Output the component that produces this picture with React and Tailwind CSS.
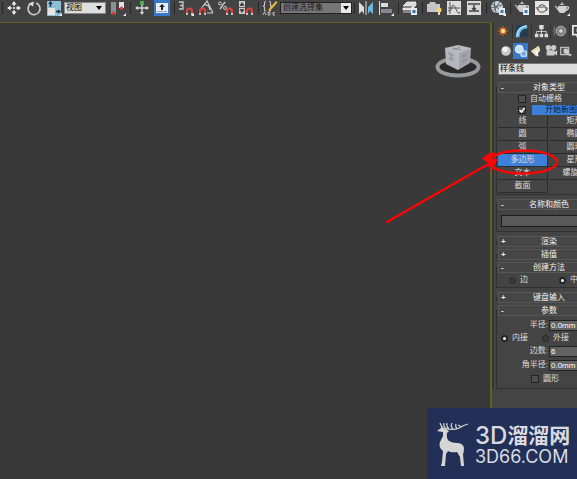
import React from "react";

function Svg({ children }) {
  return (
    <svg viewBox="0 0 16 16" className="size-4 shrink-0" fill="none" aria-hidden="true">
      {children}
    </svg>
  );
}

function Tool({ label, children }) {
  return (
    <button type="button" aria-label={label} className="flex h-4 w-5 shrink-0 items-center justify-center">
      <Svg>{children}</Svg>
    </button>
  );
}

function Separator() {
  return (
    <span className="flex h-3 w-1 shrink-0 justify-center">
      <span className="w-px bg-[#262626]" />
    </span>
  );
}

function Magnet() {
  return (
    <>
      <path d="M9 14v-3a2.5 2.5 0 0 1 5 0v3" stroke="#d9433f" strokeWidth="2" />
      <path d="M8 14h2M13 14h2" stroke="#e8e8e8" strokeWidth="1.5" />
    </>
  );
}

function Corner() {
  return <path d="M16 13v3h-3z" fill="#eee" />;
}

function Teapot({ fill }) {
  return (
    <>
      <path d="M4 6h8q2 4-2 7H6Q3 11 4 6zM5 5q3-2 6 0zM7.3 2.5h1.4V4H7.3z" fill={fill} />
      <path d="M4 10Q3 7 1 6M12 7q3-1 2.5 1T11 11" stroke={fill} strokeWidth="1.3" />
    </>
  );
}

function Toolbar() {
  return (
    <header className="flex h-[22px] shrink-0 items-start overflow-hidden bg-[#434343]">
      <div className="flex items-center">
        <Separator />
        <Tool label="移动">
          <path d="M8 4v8M4 8h8" stroke="#ddd" strokeWidth="1.5" strokeDasharray="2 1" />
          <path d="M8 1l2.5 3.5h-5zM8 15l2.5-3.5h-5zM1 8l3.500-2.500v5zM15 8l-3.500-2.500v5z" fill="#eee" />
        </Tool>
        <Tool label="旋转">
          <path d="M5 3.5A6 6 0 1 0 10 3" stroke="#ccc" strokeWidth="1.6" />
          <path d="M2.5 3.5L8 1.5 7 6.500z" fill="#ddd" />
        </Tool>
        <Tool label="缩放">
          <path d="M1 1h14v15H1z" fill="#8ebfd6" />
          <path d="M2 8h7v7H2z" fill="#e6e6e6" />
          <path d="M4.500 7V3M10 11.500h4M3 4l1.500-2L6 4M12 10l2 1.500-2 1.500" stroke="#17313d" strokeWidth="1.3" />
          <Corner />
        </Tool>
        <div className="relative mr-0.5 w-[42px]">
          <select aria-label="参考坐标系" className="block h-3 w-full appearance-none border border-[#8a8a8a] bg-[#dedede] px-px text-[8px] leading-[10px] text-black">
            <option>视图</option>
          </select>
          <span className="pointer-events-none absolute right-1 top-1 border-x-3 border-t-4 border-x-transparent border-t-black" />
        </div>
        <Tool label="轴点中心">
          <path d="M1 2h5v12H1z" fill="#8e8e96" />
          <path d="M9 2h5v6H9z" fill="#dfe1e8" />
          <path d="M3.500 11l2 2.500-2 2-2-2zM11.500 6l2 2.500-2 2-2-2z" fill="#db3630" />
          <Corner />
        </Tool>
        <Separator />
        <Tool label="选择并操纵">
          <path d="M8 3v11M2 8h12" stroke="#d5d5d5" strokeWidth="1.4" />
          <path d="M8 15l-2-3h4zM1 8l3-2v4zM15 8l-3-2v4z" fill="#ddd" />
          <path d="M6 1h4v4H6z" fill="#4fae4b" />
        </Tool>
        <Tool label="键盘快捷键覆盖">
          <path d="M0 0h16v16H0z" fill="#3779c8" />
          <path d="M2 3h12v10H2z" fill="#e8eef4" />
          <path d="M3 11h10v1H3z" fill="#8c9fb4" />
          <path d="M8 4l3 3H9v3H7V7H5z" fill="#16202c" />
        </Tool>
        <Separator />
        <Tool label="三维捕捉">
          <path d="M1 2h4v7H1M2 5.500h3" stroke="#ccc" strokeWidth="1.300" />
          <Magnet />
          <Corner />
        </Tool>
        <Tool label="角度捕捉">
          <path d="M2 10L9 1l6 12M6 5q5-1 6 5" stroke="#ccc" strokeWidth="1.200" />
          <g transform="translate(-7 0)"><Magnet /></g>
          <path d="M9 13h6" stroke="#ccc" />
        </Tool>
        <Tool label="百分比捕捉">
          <path d="M2 9l5-7" stroke="#ccc" strokeWidth="1.300" />
          <circle cx="2" cy="3.500" r="1.500" stroke="#ccc" />
          <circle cx="7" cy="8" r="1.500" stroke="#ccc" />
          <Magnet />
        </Tool>
        <Tool label="微调器捕捉">
          <path d="M1 1h6v13H1z" fill="#ccc" />
          <path d="M1 7.500h6M4 2.500l2 3H2zM4 12.500l2-3H2z" stroke="#444" strokeWidth=".8" fill="#333" />
          <Magnet />
        </Tool>
        <Separator />
        <Tool label="编辑命名选择集">
          <path d="M4 1Q2 1 2.500 4T1 6q2 0 1.500 3T4 11M7 1q2 0 1.500 3T10 6Q8 6 8.500 9T7 11" stroke="#ccc" />
          <path d="M6 10L14 1l1.500 1.500L8 11z" fill="#e8b83c" />
          <path d="M1 15l1.500-3L4 15M6 12v3h2v-3zM13 12.500h-2V15h2" stroke="#ccc" strokeWidth=".9" />
        </Tool>
        <div className="relative w-[72px]">
          <select aria-label="命名选择集" className="block h-3 w-full appearance-none border border-[#222] bg-[#777] px-0.5 text-[8px] leading-[10px] text-[#181818]">
            <option>创建选择集</option>
          </select>
          <span className="pointer-events-none absolute right-px top-px flex h-2.5 w-2.5 items-center justify-center bg-[#e8e8e8]">
            <span className="border-x-3 border-t-4 border-x-transparent border-t-black" />
          </span>
        </div>
        <Separator />
        <Tool label="镜像">
          <path d="M1 2l5 5v7l-2-3-3 3z" fill="#ddd" />
          <path d="M15 2l-5 5v7l2-3 3 3z" fill="#6bb7e3" />
          <path d="M8 1v14" stroke="#e7dfca" />
        </Tool>
        <Tool label="对齐">
          <path d="M1.500 1v14" stroke="#ddd" />
          <path d="M3 3h7v4H3z" fill="#d9d9df" />
          <path d="M3 9h11v4H3z" fill="#858595" />
          <Corner />
        </Tool>
        <Separator />
        <Tool label="层管理器">
          <path d="M5 2h9l-4 4H1zM1 8h8l5-5v2l-4 5H1zM1 12h8" fill="#ddd" stroke="#eee" strokeWidth=".8" />
          <path d="M9 8h6v7H9z" fill="#e5edf4" />
          <path d="M10.500 10h3v3h-3z" fill="#3b6f9f" />
        </Tool>
        <Separator />
        <Tool label="石墨工具">
          <path d="M1 4h2l1-2h5l1 2h4v8H1z" fill="#c4c6c9" />
          <circle cx="13" cy="10" r="2.500" fill="#f5d76b" />
          <path d="M12 12h2v3h-2z" fill="#ddd" />
        </Tool>
        <Tool label="曲线编辑器">
          <path d="M1 1h14v14H1z" fill="#ddd" />
          <path d="M4 2v12M2 8h12M2 11q3 1 4-4t4 2 4 3" stroke="#555" />
        </Tool>
        <Tool label="图解视图">
          <path d="M1 1h14v14H1z" fill="#d8d8d8" />
          <path d="M2 4h12M3 11h10M8 5v5M6 8l2 2 2-2" stroke="#444" strokeWidth="1.500" />
        </Tool>
        <Separator />
        <Tool label="材质编辑器">
          <circle cx="7" cy="7" r="6" fill="#c7d3d8" />
          <path d="M2 4l10 7M4 1l2 12M10 2L3 11M1 8l11-3" stroke="#56646d" />
          <path d="M9 8h6v7H9z" fill="#e4edf6" />
          <path d="M10.500 10h3v3h-3z" fill="#3f78af" />
          <Corner />
        </Tool>
        <Separator />
        <Tool label="渲染设置">
          <g transform="translate(0 -1)"><Teapot fill="#cecece" /></g>
          <path d="M9 8h6v7H9z" fill="#e4edf6" />
          <path d="M10.500 10h3v3h-3z" fill="#3f78af" />
        </Tool>
        <Tool label="渲染帧窗口">
          <path d="M1 1h14v14H1z" fill="#e5e5e5" />
          <path d="M4 7h8q1 4-2 5H6Q3 11 4 7zM5 6q3-3 6 0M4 10L2 7M12 8q3-1 0 3" stroke="#555" />
        </Tool>
        <Tool label="渲染产品">
          <Teapot fill="#d2d2d2" />
          <Corner />
        </Tool>
      </div>
    </header>
  );
}

function ViewCube() {
  return (
    <svg viewBox="0 0 48 36" className="h-9 w-12" role="img" aria-label="ViewCube">
      <ellipse cx="24" cy="24" rx="20.500" ry="8.500" fill="#2a2a2a" stroke="#98999b" strokeWidth="4" />
      <path d="M11 5L24 2l13 3-13 5z" fill="#b9bbc0" />
      <path d="M11 5l13 5v17l-12-6z" fill="#b4b6bb" />
      <path d="M24 10l13-5-1 15-12 7z" fill="#a3a5ab" />
      <path d="M14 10l6 3M15 15l5 2M17 10v8M27 14l6-3M27 19l6-3M30 11v9M18 5l9 2M26 4l-6 3" stroke="#8d8f95" />
      <path d="M11 5l13 5 13-5M24 10v17" stroke="#cfd0d4" strokeWidth=".6" fill="none" />
    </svg>
  );
}

function PanelIcon({ label, active, children, wide }) {
  return (
    <button
      type="button"
      aria-label={label}
      className={`flex h-4 shrink-0 items-center justify-center ${wide ? "w-[19px] border-r border-[#333]" : "w-[15px]"} ${active ? "bg-[#3779c8]" : ""}`}
    >
      <svg viewBox="0 0 16 16" className="size-3.5 shrink-0" fill="none" aria-hidden="true">{children}</svg>
    </button>
  );
}

function Rollout({ title, children }) {
  return (
    <section className="border border-[#313131]">
      <button
        type="button"
        aria-expanded={Boolean(children)}
        className={`relative z-10 -mt-1.5 ml-px flex h-[11px] w-[102px] items-center border border-[#575757] bg-[#464646] px-0.5 text-[#f2f2f2] ${children ? "" : "-mb-[3px]"}`}
      >
        <span className="w-2 text-left font-bold">{children ? "-" : "+"}</span>
        <span className="grow pr-2 text-center">{title}</span>
      </button>
      {children}
    </section>
  );
}

function Check({ label, checked, hideLabel }) {
  return (
    <label className="flex items-center gap-1">
      <span className="relative flex size-2 items-center justify-center">
        <input type="checkbox" defaultChecked={checked} className="peer size-2 appearance-none border border-[#222] bg-[#505050]" />
        <svg viewBox="0 0 8 8" className="pointer-events-none absolute inset-0 hidden size-2 peer-checked:block" aria-hidden="true">
          <path d="M1.500 4l2 2 3-4" stroke="#fff" strokeWidth="1.500" fill="none" />
        </svg>
      </span>
      <span className={hideLabel ? "sr-only" : ""}>{label}</span>
    </label>
  );
}

function Radio({ label, name, checked }) {
  return (
    <label className="flex items-center gap-1">
      <input
        type="radio"
        name={name}
        defaultChecked={checked}
        className="size-[7px] appearance-none rounded-full border border-[#252525] bg-[#3c3c3c] checked:border-2 checked:bg-white"
      />
      {label}
    </label>
  );
}

function Field({ label, value }) {
  return (
    <label className="flex h-3.5 items-center">
      <span className="w-[51px] text-right">{label}:</span>
      <input defaultValue={value} className="ml-px h-[11px] w-12 border border-[#222] bg-[#626262] px-px text-[8px] text-white" />
    </label>
  );
}

const shapes = ["线", "矩形", "圆", "椭圆", "弧", "圆环", "多边形", "星形", "文本", "螺旋线", "截面"];

function CommandPanel() {
  return (
    <aside className="w-[87px] shrink-0 overflow-hidden border-l-2 border-[#655f27] bg-[#444]">
      <div className="w-[112px] border-l-2 border-[#373737]">
        <nav className="flex pt-px" aria-label="命令面板">
          <PanelIcon wide label="创建">
            <circle cx="8" cy="8" r="4" fill="#c9581f" />
            <path d="M8 2v12M2 8h12M4 4l8 8M12 4l-8 8" stroke="#d9691f" />
            <circle cx="8" cy="8" r="2.500" fill="#ffdf8d" />
          </PanelIcon>
          <PanelIcon wide label="修改">
            <path d="M1 1h14v14H1z" fill="#263c52" />
            <path d="M3 15Q3 4 14 3" stroke="#72b9e7" strokeWidth="4" />
            <path d="M2 14Q3 3 13 2" stroke="#d5edf8" />
          </PanelIcon>
          <PanelIcon wide label="层次">
            <path d="M6 1h5v5H6zM1 11h4v4H1zM6.500 11h4v4h-4zM12 11h4v4h-4z" fill="#ddd" />
            <path d="M8.500 6v5M3 11V8.500h11V11" stroke="#ddd" />
          </PanelIcon>
          <PanelIcon wide label="运动">
            <circle cx="9" cy="8" r="5.500" fill="#808080" stroke="#bbb" />
            <circle cx="9" cy="8" r="2" fill="#ddd" />
            <path d="M2 3q-2 5 0 10" stroke="#888" />
          </PanelIcon>
          <PanelIcon wide label="显示">
            <path d="M1 2h14v10H1zM5 14h7" stroke="#e5e5e5" strokeWidth="2" />
            <path d="M5 5h6v4H5z" fill="#aaa" />
          </PanelIcon>
        </nav>
        <nav className="flex pl-1 pt-1" aria-label="创建类别">
          <PanelIcon label="几何体">
            <circle cx="8" cy="8" r="5.500" fill="#c9c9c9" />
            <circle cx="7" cy="6" r="3" fill="#f2f2f2" />
          </PanelIcon>
          <PanelIcon label="图形" active>
            <circle cx="6" cy="6" r="4.500" fill="#c4dff6" stroke="#fff" />
            <path d="M8 8h6v6H8z" fill="#76a9df" stroke="#fff" />
          </PanelIcon>
          <PanelIcon label="灯光">
            <path d="M2 8l9-6 2 5-5 7z" fill="#e9e1bd" />
            <path d="M8 8l2 6" stroke="#fff" strokeWidth="2" />
          </PanelIcon>
          <PanelIcon label="摄影机">
            <circle cx="5" cy="4" r="3" fill="#ccc" />
            <circle cx="11" cy="4" r="3" fill="#ccc" />
            <path d="M3 7h9v6H3zM12 9l3-2v6l-3-2z" fill="#ccc" />
          </PanelIcon>
          <PanelIcon label="辅助对象">
            <path d="M2 4h9v8H2z" stroke="#bbb" strokeWidth="1.500" />
            <circle cx="8" cy="8" r="3" fill="#ccc" />
            <path d="M9 11l5 2" stroke="#ccc" strokeWidth="2" />
          </PanelIcon>
        </nav>
        <select aria-label="对象类别" className="mt-1 ml-1 block h-3 w-[102px] appearance-none border border-[#777] bg-[#dcdcdc] px-px text-[8px] leading-[10px] text-black">
          <option>样条线</option>
        </select>
        <div className="ml-0.5 mt-3 flex w-[106px] flex-col gap-[9px]">
          <Rollout title="对象类型">
            <div className="flex h-[11px] items-center pl-[21px]">
              <Check label="自动栅格" />
            </div>
            <div className="flex h-[11px] items-center gap-1.5 pl-[21px]">
              <Check label="开始新图形" checked hideLabel />
              <button type="button" className="h-2.5 w-[66px] bg-[#3d7fd6] text-[#0b1a30]">开始新图形</button>
            </div>
            <div className="ml-px grid w-[102px] grid-cols-2 gap-x-0.5 pb-px">
              {shapes.map((name) => (
                <button
                  key={name}
                  type="button"
                  aria-pressed={name === "多边形"}
                  className="h-[13px] border-b border-r border-[#2c2c2c] bg-[#454545] leading-3 aria-pressed:bg-[#3d82d8]"
                >
                  {name}
                </button>
              ))}
            </div>
          </Rollout>
          <Rollout title="名称和颜色">
            <div className="px-1 pb-1 pt-[5px]">
              <input aria-label="名称" className="block h-3 w-full border border-[#1d1d1d] bg-[#595959]" />
            </div>
          </Rollout>
          <Rollout title="渲染" />
          <Rollout title="插值" />
          <Rollout title="创建方法">
            <div className="flex h-3.5 gap-[31px] pl-3">
              <Radio name="method" label="边" />
              <Radio name="method" label="中心" checked />
            </div>
          </Rollout>
          <Rollout title="键盘输入" />
          <Rollout title="参数">
            <div className="py-0.5">
              <Field label="半径" value="0.0mm" />
              <div className="flex h-3 gap-3.5 pl-1">
                <Radio name="fit" label="内接" checked />
                <Radio name="fit" label="外接" />
              </div>
              <Field label="边数" value="6" />
              <Field label="角半径" value="0.0mm" />
              <div className="flex h-3.5 items-center pl-[34px]">
                <Check label="圆形" />
              </div>
            </div>
          </Rollout>
        </div>
      </div>
    </aside>
  );
}

function Annotation() {
  return (
    <svg viewBox="377 145 200 85" className="pointer-events-none absolute right-0 top-[145px] z-20 h-[85px] w-[200px]" fill="none" aria-hidden="true">
      <path d="M387 222L492 162" stroke="#fb0505" strokeWidth="2.500" strokeLinecap="round" />
      <path d="M498 159l-17-1 7 5-2 3 5 1-1 6z" fill="#fb0505" />
      <path d="M483 158q7-7 13-5l-8 9z" fill="#fb0505" />
      <ellipse cx="523" cy="162" rx="34" ry="11.500" stroke="#fb0505" strokeWidth="2.500" />
    </svg>
  );
}

function Brand() {
  return (
    <div className="absolute bottom-0 right-0 z-20 flex h-[71px] w-[150px] items-center gap-1.5 bg-[#223058] pl-2 text-[#d9dbe0]">
      <svg viewBox="5 6 34 46" className="h-[46px] w-[34px] shrink-0" fill="none" aria-hidden="true">
        <path d="M7 16l4-3 1-2 1 2 3 1 3 2-2 2q-1 5 2 8 3 2 8 2 6 0 7 5 0 4-1 6l1 12h-3l-1-9-3-5q-6 1-9-1l-2 3-1 12h-4l1-4 1-11q-5-4-3-9l3-6v-4z" fill="#d5d5d5" />
        <path d="M14 14q-3-2-4-6M16 14q-3-3-2-6M15 13q8 3 14 0 5-3 9-4M19 14q-3-3-2-6M23 14q-3-3-1-6M27 14q-2-3-1-5M32 12l-4-2" stroke="#d5d5d5" strokeWidth="1.200" />
      </svg>
      <div className="whitespace-nowrap pt-0.5">
        <div className="flex h-[25px] items-center font-['Inter','Noto_Sans_CJK_SC',sans-serif] text-[21px] font-bold leading-[25px]">
          <span className="text-[24px] font-medium">3D</span>溜溜网
        </div>
        <div className="font-['Inter',sans-serif] text-[18px] leading-[18px]">3D66.COM</div>
      </div>
    </div>
  );
}

export default function App() {
  return (
    <div className="relative flex min-h-screen flex-col overflow-hidden bg-[#393939] font-['Liberation_Sans','Noto_Sans_CJK_SC',sans-serif] text-[8px] leading-[10px] text-[#dedede]">
      <Toolbar />
      <div className="flex grow">
        <main className="flex grow items-start justify-end border-t border-[#655f27] pr-2 pt-5">
          <ViewCube />
        </main>
        <CommandPanel />
      </div>
      <Annotation />
      <Brand />
    </div>
  );
}
